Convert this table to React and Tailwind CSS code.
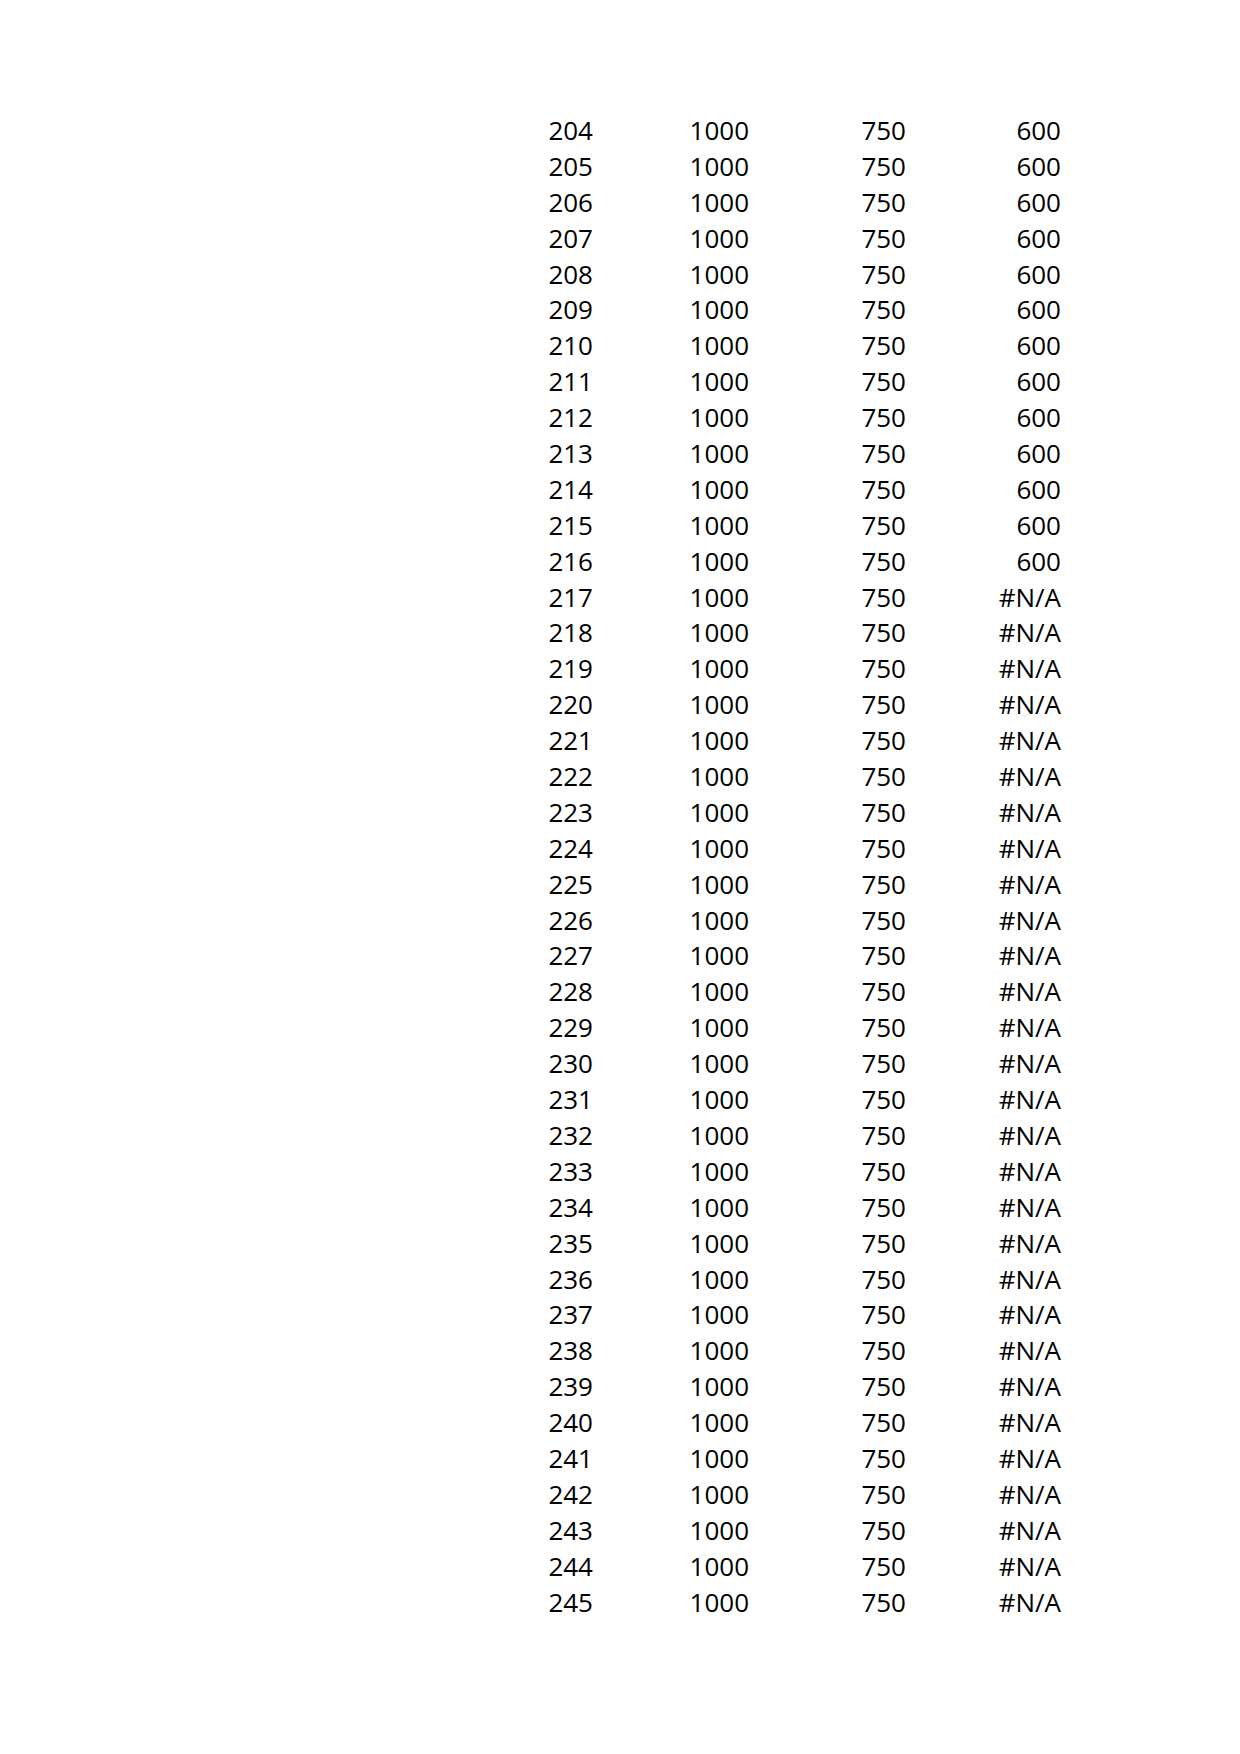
export default function App() {
  const rows = [];
  for (let n = 204; n <= 245; n++) {
    rows.push({ a: n, b: 1000, c: 750, d: n <= 216 ? "600" : "#N/A" });
  }
  return (
    <div className="w-[1240px] h-[1754px] bg-white text-black pt-[113px] pl-[500px]" style={{ fontFamily: '"Open Sans", "Noto Sans", sans-serif' }}>
      <div className="grid grid-cols-[93px_156px_157px_155px] auto-rows-[35.9px] text-[26px] leading-[35.9px]">
        {rows.map((r) => (
          <div key={r.a} className="contents">
            <div className="text-right">{r.a}</div>
            <div className="text-right">{r.b}</div>
            <div className="text-right">{r.c}</div>
            <div className="text-right">{r.d}</div>
          </div>
        ))}
      </div>
    </div>
  );
}
